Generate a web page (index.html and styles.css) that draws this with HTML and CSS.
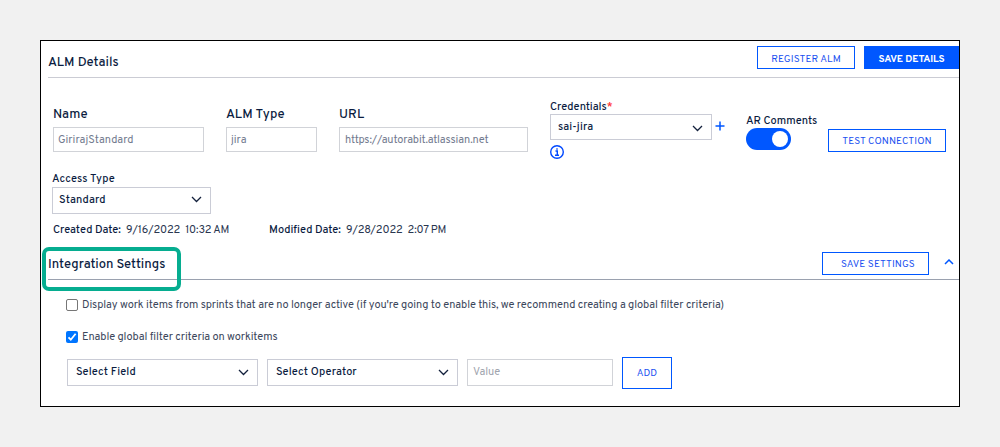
FILE: index.html
```html
<!DOCTYPE html>
<html lang="en">
<head>
<meta charset="utf-8">
<title>ALM Details</title>
<link rel="stylesheet" href="styles.css">
</head>
<body>
<main class="panel">
  <header class="bar">
    <h2 class="heading heading-alm">ALM Details</h2>
    <button class="btn btn-register">REGISTER ALM</button>
    <button class="btn btn-primary">SAVE DETAILS</button>
  </header>

  <section class="details">
    <div class="field field-name"><label class="label-lg">Name</label><input class="input" value="GirirajStandard" disabled></div>
    <div class="field field-type"><label class="label-lg">ALM Type</label><input class="input" value="jira" disabled></div>
    <div class="field field-url"><label class="label-lg">URL</label><input class="input input-url" value="https://autorabit.atlassian.net" disabled></div>
    <div class="field field-cred">
      <label class="label-sm">Credentials<span class="required">*</span></label>
      <div class="select select-cred"><span>sai-jira</span><svg class="chevron" viewBox="0 0 11 7"><path d="M1 1l4.5 4.5L10 1"/></svg></div>
      <svg class="info" viewBox="0 0 14 14"><circle cx="7" cy="7" r="6.3"/><path d="M5.5 6h1.8v4.2M5 10.2h4M7 3.2v1.6"/></svg>
    </div>
    <svg class="plus" viewBox="0 0 10 10"><path d="M5 .5v9M.5 5h9"/></svg>
    <div class="field field-toggle"><label class="label-sm">AR Comments</label><span class="toggle"><span class="knob"></span></span></div>
    <button class="btn btn-test">TEST CONNECTION</button>
  </section>

  <section class="access">
    <label class="label-sm label-access">Access Type</label>
    <div class="select select-access"><span>Standard</span><svg class="chevron" viewBox="0 0 11 7"><path d="M1 1l4.5 4.5L10 1"/></svg></div>
    <div class="dates">
      <p class="date created"><b>Created Date:</b><span>9/16/2022&nbsp; 10:32 AM</span></p>
      <p class="date"><b class="modified">Modified Date:</b><span>9/28/2022&nbsp; 2:07 PM</span></p>
    </div>
  </section>

  <header class="bar bar-settings">
    <h2 class="heading heading-int">Integration Settings</h2>
    <button class="btn btn-settings">SAVE SETTINGS</button>
    <svg class="collapse" viewBox="0 0 10 6"><path d="M1 5l4-4 4 4"/></svg>
    <span class="highlight"></span>
  </header>

  <section class="settings">
    <label class="check"><span class="box"></span><span>Display work items from sprints that are no longer active (if you're going to enable this, we recommend creating a global filter criteria)</span></label>
    <label class="check"><span class="box box-on"><svg viewBox="0 0 12 12"><path d="M2.5 6.3l2.3 2.4L9.6 2.8"/></svg></span><span>Enable global filter criteria on workitems</span></label>
    <div class="filters">
      <div class="select select-filter"><span>Select Field</span><svg class="chevron" viewBox="0 0 11 7"><path d="M1 1l4.5 4.5L10 1"/></svg></div>
      <div class="select select-filter"><span>Select Operator</span><svg class="chevron" viewBox="0 0 11 7"><path d="M1 1l4.5 4.5L10 1"/></svg></div>
      <input class="input input-value" placeholder="Value">
      <button class="btn btn-add">ADD</button>
    </div>
  </section>
</main>
</body>
</html>
```

FILE: styles.css
```css
* { box-sizing: border-box; }
body {
  margin: 0;
  padding: 40px;
  height: 447px;
  background: #f1f1f1;
  font-family: Overpass, Roboto, sans-serif;
  font-size: 11px;
  color: #0b1c3f;
}
h2, p { margin: 0; }
svg { fill: none; flex: none; }

.panel {
  width: 920px;
  height: 367px;
  border: 1px solid #000;
  background: #fff;
}

.bar {
  display: flex;
  align-items: flex-start;
  height: 37px;
  margin-left: 7px;
  padding-top: 5px;
  border-bottom: 1px solid #cbccd4;
}
.heading {
  margin-right: auto;
  padding-top: 9px;
  font-size: 13px;
  line-height: 16px;
  font-weight: 500;
  letter-spacing: .02px;
  white-space: nowrap;
}
.heading-int { padding-top: 5px; }

.btn {
  display: flex;
  align-items: center;
  justify-content: center;
  height: 23px;
  padding: 2px 0 0;
  border: 1px solid #0057ff;
  background: #fff;
  color: #1a50f0;
  font: 400 10px Overpass, Roboto, sans-serif;
  letter-spacing: .1px;
  white-space: nowrap;
}
.btn-register { width: 98px; margin-right: 9px; padding-top: 3px; }
.btn-primary { width: 95px; padding-top: 3px; background: #0057ff; color: #fff; font-weight: 700; letter-spacing: -.1px; }

.details {
  display: flex;
  align-items: flex-start;
  height: 93px;
  padding-left: 12px;
}
.field { display: flex; flex-direction: column; align-items: flex-start; flex: none; }
.field-name { width: 151px; margin: 28px 22px 0 0; }
.field-type { width: 91px; margin: 28px 22px 0 0; }
.field-url { width: 189px; margin: 28px 22px 0 0; }
.field-cred { width: 162px; margin-top: 22px; }
.field-toggle { width: 82px; margin-top: 36px; }

.label-lg { height: 21px; font-size: 13px; line-height: 19px; font-weight: 500; letter-spacing: .05px; }
.label-sm { font-size: 11px; line-height: 14px; font-weight: 500; white-space: nowrap; }
.required { color: #f33; }

.input {
  width: 100%;
  height: 25px;
  padding: 0 4px;
  border: 1px solid #d1d3d8;
  background: #fff;
  color: #737b8f;
  font: 400 11px Overpass, Roboto, sans-serif;
}
.input-url { padding: 0 5px; letter-spacing: -.12px; }
.select {
  display: flex;
  align-items: center;
  justify-content: space-between;
  height: 27px;
  padding: 0 8px 2px 7px;
  border: 1px solid #caccd6;
  background: #fff;
  font-weight: 500;
  letter-spacing: .12px;
}
.select-cred { width: 162px; height: 26px; padding-bottom: 0; }
.chevron { width: 11px; height: 7px; stroke: #14213d; stroke-width: 1.3; }
.select-cred .chevron { margin-top: 3px; }
.info { width: 14px; height: 14px; margin-top: 5px; stroke: #0048ff; stroke-width: 1.4; }
.plus { width: 10px; height: 10px; margin: 43px 21px 0 3px; stroke: #0057ff; stroke-width: 1.5; }

.toggle {
  display: flex;
  justify-content: flex-end;
  align-items: center;
  width: 45px;
  height: 22px;
  padding-right: 3px;
  border-radius: 11px;
  background: #0057ff;
}
.knob { width: 16px; height: 16px; border-radius: 50%; background: #fff; }
.btn-test { width: 118px; margin-top: 51px; }

.access { height: 76px; padding-left: 11px; }
.access .label-sm { display: block; height: 16px; line-height: 16px; letter-spacing: .05px; }
.select-access { width: 159px; padding-left: 6px; }
.dates { display: flex; padding: 9px 0 0 1px; line-height: 14px; }
.date { display: flex; white-space: nowrap; color: #2a3650; letter-spacing: -.12px; }
.date b { font-weight: 500; color: #0b1c3f; width: 73px; letter-spacing: 0; }
.created { width: 216px; }
.date .modified { width: 77px; }

.bar-settings {
  position: relative;
  height: 33px;
  border-bottom-color: #9aa1af;
}
.btn-settings { width: 107px; margin-right: 15px; padding-left: 5px; }
.collapse { width: 10px; height: 6px; margin: 7px 5px 0 0; stroke: #0057ff; stroke-width: 1.5; }
.highlight {
  position: absolute;
  left: -6px;
  top: 0;
  width: 139px;
  height: 44px;
  border: 4px solid #06ad90;
  border-radius: 7px;
}

.settings { padding: 18px 0 0 25px; color: #3c475c; }
.check { display: flex; align-items: center; height: 14px; margin-bottom: 18px; white-space: nowrap; letter-spacing: -.09px; }
.box {
  flex: none;
  width: 12px;
  height: 12px;
  margin-right: 4px;
  border: 1px solid #767676;
  border-radius: 2px;
}
.box-on { border: 0; background: #0075ff; }
.box-on svg { display: block; width: 12px; height: 12px; stroke: #fff; stroke-width: 1.8; }
.filters { display: flex; align-items: flex-start; height: 32px; margin: -5px 0 0 1px; color: #0b1c3f; }
.select-filter { width: 191px; margin: 2px 9px 0 0; padding-left: 8px; }
.select-filter .chevron { margin-top: 2px; }
.input-value { width: 146px; height: 27px; margin: 2px 9px 0 0; padding: 0 5px 2px; }
.input-value::placeholder { color: #a0a4ae; opacity: 1; }
.btn-add { width: 50px; height: 32px; padding-top: 1px; }
```
